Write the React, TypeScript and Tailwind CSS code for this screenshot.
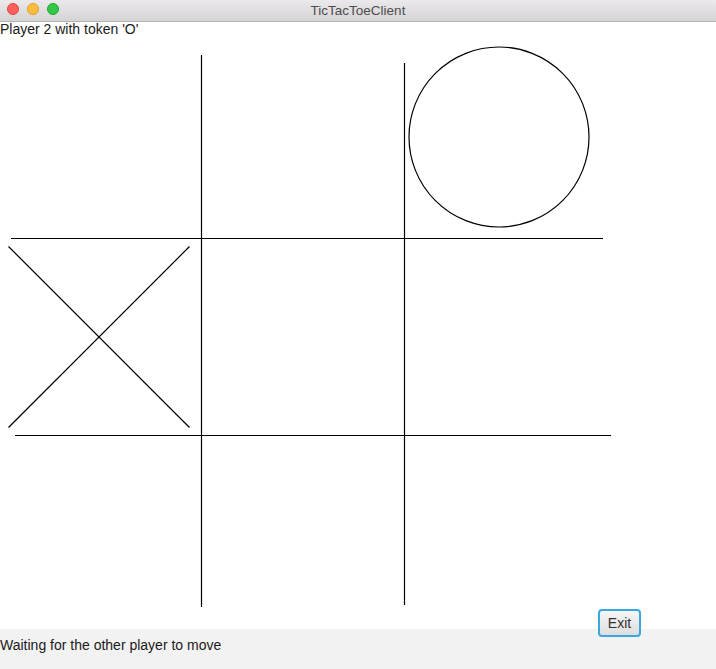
import React from "react";

export default function App() {
  const oy = 36;
  return (
    <div
      className="relative flex h-[669px] w-[716px] flex-col overflow-hidden bg-white text-[#1a1a1a]"
      style={{ fontFamily: '"Liberation Sans", Arial, sans-serif' }}
    >
      <div className="relative flex h-[22px] shrink-0 items-center justify-center border-b border-[#b3b3b3] bg-gradient-to-b from-[#ebe9eb] to-[#d5d3d5]">
        <div className="absolute left-[7px] top-[3px] flex gap-[8px]">
          <span className="block h-[12px] w-[12px] rounded-full border border-[#e2463f] bg-[#fc605c]" />
          <span className="block h-[12px] w-[12px] rounded-full border border-[#e1a116] bg-[#fdbc40]" />
          <span className="block h-[12px] w-[12px] rounded-full border border-[#1aab29] bg-[#34c84a]" />
        </div>
        <span className="text-[13.5px] leading-none text-[#4d4d4d]">TicTacToeClient</span>
      </div>
      <div className="h-[14px] shrink-0 text-[14px] leading-[14px]">Player 2 with token &#39;O&#39;</div>
      <svg width={716} height={593} className="block shrink-0" viewBox={`0 ${oy} 716 593`}>
        <g stroke="#000" strokeWidth={1.2} fill="none">
          <line x1={201.5} y1={55} x2={201.5} y2={607} />
          <line x1={404.5} y1={63} x2={404.5} y2={605} />
          <line x1={11} y1={238.5} x2={603} y2={238.5} />
          <line x1={15} y1={435.5} x2={611} y2={435.5} />
          <line x1={8.5} y1={246.5} x2={189.5} y2={427.5} />
          <line x1={189.5} y1={246.5} x2={8.5} y2={427.5} />
          <circle cx={499} cy={137} r={90} />
        </g>
      </svg>
      <div className="h-[40px] shrink-0 bg-[#f2f2f2] pt-[8px] text-[14px] leading-[16px]">
        Waiting for the other player to move
      </div>
      <button className="absolute left-[598px] top-[609px] flex h-[28px] w-[43px] items-center justify-center rounded-[4px] border-2 border-[#3ba8dd] bg-gradient-to-b from-[#f6f6f6] to-[#dedede] text-[14px] text-[#333]">
        Exit
      </button>
    </div>
  );
}
